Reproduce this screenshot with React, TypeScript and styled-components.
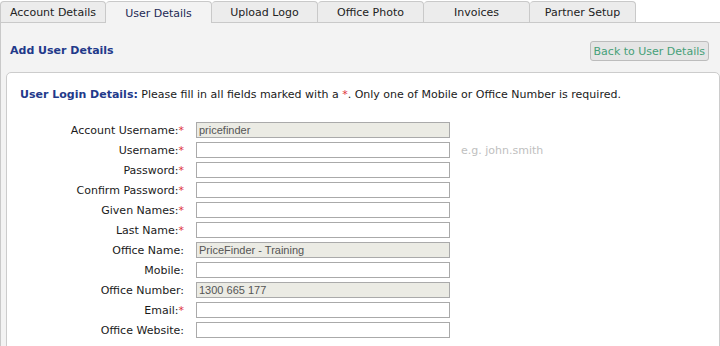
import { createGlobalStyle, styled } from 'styled-components';

const GlobalStyle = createGlobalStyle`
  html, body {
    margin: 0;
    padding: 0;
    background: #ffffff;
    overflow: hidden;
  }
  body {
    font-family: 'DejaVu Sans', Verdana, sans-serif;
    font-size: 11px;
    color: #1a1a1a;
  }
`;

const tabs = ['Account Details', 'User Details', 'Upload Logo', 'Office Photo', 'Invoices', 'Partner Setup'];

type Field = { label: string; required?: boolean; value?: string; disabled?: boolean; hint?: string };

const fields: Field[] = [
  { label: 'Account Username:', required: true, value: 'pricefinder', disabled: true },
  { label: 'Username:', required: true, hint: 'e.g. john.smith' },
  { label: 'Password:', required: true },
  { label: 'Confirm Password:', required: true },
  { label: 'Given Names:', required: true },
  { label: 'Last Name:', required: true },
  { label: 'Office Name:', value: 'PriceFinder - Training', disabled: true },
  { label: 'Mobile:' },
  { label: 'Office Number:', value: '1300 665 177', disabled: true },
  { label: 'Email:', required: true },
  { label: 'Office Website:' },
];

const App = () => {
  return (
    <>
      <GlobalStyle />
      <STabBar>
        {tabs.map(t => (
          <STab key={t} $active={t === 'User Details'}>
            {t}
          </STab>
        ))}
      </STabBar>
      <SPanel>
        <SHeader>
          <STitle>Add User Details</STitle>
          <SBackButton type="button">Back to User Details</SBackButton>
        </SHeader>
        <SBox>
          <SIntro>
            <strong>User Login Details:</strong> Please fill in all fields marked with a <SStar>*</SStar>. Only one
            of Mobile or Office Number is required.
          </SIntro>
          <SForm>
            {fields.map(f => (
              <SRow key={f.label}>
                <SLabel>
                  {f.label}
                  {f.required && <SStar>*</SStar>}
                </SLabel>
                <SInput type="text" defaultValue={f.value} readOnly={f.disabled} $disabled={f.disabled} />
                <SHint>{f.hint}</SHint>
              </SRow>
            ))}
          </SForm>
        </SBox>
      </SPanel>
    </>
  );
};

const STabBar = styled.div`
  display: flex;
  height: 23px;
  padding-top: 1px;
  box-sizing: border-box;
  border-bottom: 1px solid #c9c9c9;
`;

const STab = styled.div<{ $active?: boolean }>`
  width: 106px;
  box-sizing: border-box;
  display: flex;
  align-items: center;
  justify-content: center;
  border: 1px solid #c9c9c9;
  border-left: none;
  border-bottom: none;
  border-radius: 4px 4px 0 0;
  background: ${p => (p.$active ? '#f3f3f3' : '#ececec')};
  color: ${p => (p.$active ? '#1d2a55' : '#222222')};
  margin-bottom: ${p => (p.$active ? '-1px' : '0')};
  padding-top: 1px;

  &:first-child {
    border-left: 1px solid #c9c9c9;
  }
`;

const SPanel = styled.section`
  background: #f3f3f3;
  border-left: 1px solid #c9c9c9;
  height: 323px;
`;

const SHeader = styled.div`
  height: 49px;
  box-sizing: border-box;
  display: flex;
  align-items: center;
  justify-content: space-between;
  padding: 7px 11px 0 9px;
`;

const STitle = styled.h2`
  margin: 0;
  font-size: 11px;
  font-weight: bold;
  color: #22398a;
  padding-bottom: 1px;
`;

const SBackButton = styled.button`
  height: 20px;
  padding: 0 3px;
  font-family: 'DejaVu Sans', Verdana, sans-serif;
  font-size: 11px;
  color: #45a078;
  background: #e5e5e5;
  border: 1px solid #bcbcbc;
  border-radius: 3px;
`;

const SBox = styled.div`
  margin-left: 5px;
  height: 280px;
  background: #ffffff;
  border: 1px solid #cccccc;
  border-radius: 5px 5px 0 0;
  padding: 14px 13px 0 13px;
  box-sizing: border-box;

  strong {
    color: #22398a;
  }
`;

const SIntro = styled.p`
  margin: 0;
  line-height: 15px;
`;

const SForm = styled.div`
  margin-top: 18px;
  display: flex;
  flex-direction: column;
`;

const SRow = styled.div`
  display: grid;
  grid-template-columns: 164px 254px auto;
  column-gap: 12px;
  align-items: center;
  height: 20px;
`;

const SLabel = styled.label`
  text-align: right;
  white-space: nowrap;
`;

const SStar = styled.span`
  color: #e0303a;
`;

const SInput = styled.input<{ $disabled?: boolean }>`
  box-sizing: border-box;
  width: 254px;
  height: 16px;
  margin: 0;
  padding: 0 2px;
  border: 1px solid #aaaaaa;
  border-radius: 0;
  outline: none;
  font-family: 'Liberation Sans', Arial, sans-serif;
  font-size: 11px;
  color: #555555;
  background: ${p => (p.$disabled ? '#ebebe4' : '#ffffff')};
`;

const SHint = styled.span`
  margin-left: -1px;
  color: #c0c0c0;
`;

export default App;
